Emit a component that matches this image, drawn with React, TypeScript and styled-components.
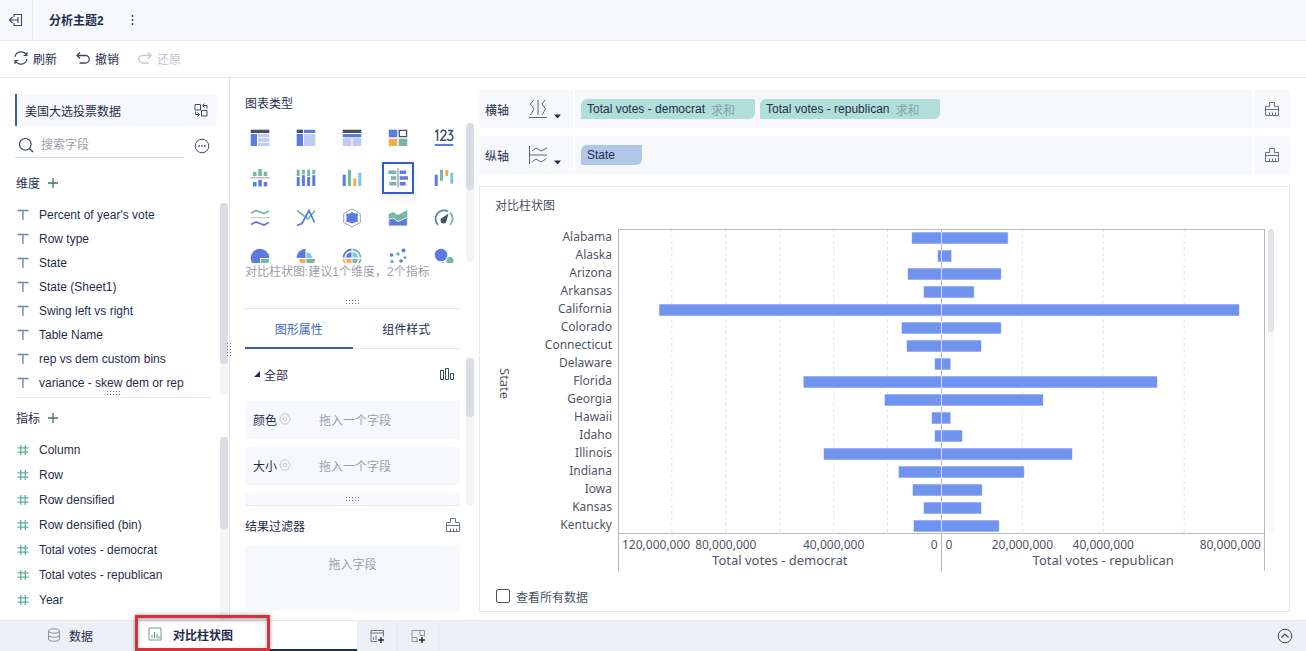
import React from 'react';
import styled, { createGlobalStyle, css } from 'styled-components';

const ink = '#1f2d4d';
const muted = '#9a9fab';
const line = '#e6e8ee';
const soft = '#f7f8fc';
const blue = '#5b7be0';
const pale = '#bccaf4';
const green = '#74b8a6';
const orange = '#f2ac4e';
const sky = '#7cc4ea';
const dark = '#46506a';

const GlobalStyle = createGlobalStyle`
  * { box-sizing: border-box; }
  body { margin: 0; background: #fff; }
  body, button, input {
    font-family: "Liberation Sans", "Noto Sans CJK SC", sans-serif;
    font-size: 12px;
    color: ${ink};
  }
  button { border: 0; padding: 0; background: none; cursor: pointer; }
  ul { list-style: none; margin: 0; padding: 0; }
  h1, h2 { margin: 0; font-size: 12px; font-weight: 400; }
  svg { display: block; flex: none; }
`;

const App = styled.div`
  display: flex;
  flex-direction: column;
  height: 100vh;
  min-width: 960px;
  overflow: hidden;
`;

const TopBar = styled.header`
  display: flex;
  align-items: center;
  flex: none;
  height: 41px;
  background: ${soft};
  border-bottom: 1px solid ${line};
`;

const ExitButton = styled.button`
  display: flex;
  align-items: center;
  justify-content: center;
  width: 33px;
  height: 100%;
  border-right: 1px solid ${line};
`;

const ThemeTitle = styled.h1`
  margin: 0 24px 0 16px;
  padding-bottom: 2px;
  font-weight: 700;
`;

const Toolbar = styled.nav`
  display: flex;
  align-items: center;
  gap: 18px;
  flex: none;
  height: 37px;
  padding: 0 0 2px 13px;
  border-bottom: 1px solid ${line};
`;

const ToolButton = styled.button`
  display: flex;
  align-items: center;
  gap: 4px;
  color: ${ink};
  &:disabled { color: #c3c6ce; }
`;

const Workspace = styled.div`
  display: flex;
  flex: 1;
  min-height: 0;
`;

const FieldPanel = styled.aside`
  position: relative;
  display: flex;
  flex-direction: column;
  width: 230px;
  padding: 16px 1px 0 15px;
  border-right: 1px solid ${line};
`;

const Dataset = styled.div`
  display: flex;
  align-items: center;
  justify-content: space-between;
  flex: none;
  height: 32px;
  margin-right: 11px;
  padding: 0 8px;
  background: ${soft};
  border-left: 2px solid #3d5f9c;
`;

const SearchRow = styled.div`
  display: flex;
  align-items: center;
  gap: 10px;
  flex: none;
  height: 32px;
  margin-right: 18px;
  padding-top: 7px;
`;

const SearchBox = styled.label`
  display: flex;
  align-items: center;
  flex: 1;
  gap: 7px;
  min-width: 0;
  height: 100%;
  padding-left: 3px;
  border-bottom: 1px solid #d6d9df;
`;

const SearchInput = styled.input`
  flex: 1;
  min-width: 0;
  padding: 0;
  border: 0;
  outline: 0;
  background: none;
  &::placeholder { color: ${muted}; opacity: 1; }
`;

const GroupHead = styled.div<{ $height: number }>`
  display: flex;
  align-items: center;
  gap: 8px;
  flex: none;
  height: ${p => p.$height}px;
  padding-left: 1px;
`;

const DimensionHead = styled(GroupHead)`
  padding-top: 4px;
`;

const Scroller = styled.div<{ $grow?: boolean }>`
  display: flex;
  justify-content: space-between;
  flex: ${p => (p.$grow ? '1' : 'none')};
  min-height: 0;
  overflow: hidden;
`;

const Track = styled.div`
  flex: none;
  width: 8px;
  background: #f3f4f6;
  border-radius: 4px;
`;

const Thumb = styled.div<{ $size: number }>`
  width: 8px;
  height: ${p => p.$size}px;
  background: #dadde3;
  border-radius: 4px;
`;

const Field = styled.li<{ $height: number }>`
  display: flex;
  align-items: center;
  gap: 10px;
  height: ${p => p.$height}px;
  padding-left: 2px;
  white-space: nowrap;
`;

const Splitter = styled.div`
  display: flex;
  justify-content: center;
  flex: none;
  border-bottom: 1px solid ${line};
`;

const FieldSplitter = styled(Splitter)`
  height: 7px;
  margin: -4px 16px 0 0;
`;

const ChartSplitter = styled(Splitter)`
  align-items: center;
  height: 12px;
`;

const PanelGrip = styled.div`
  position: absolute;
  right: -3px;
  top: 265px;
`;

const ConfigPanel = styled.aside`
  display: flex;
  flex-direction: column;
  width: 249px;
  padding: 14px 5px 9px 15px;
`;

const ConfigSection = styled.div`
  display: flex;
  flex-direction: column;
  flex: none;
  margin-right: 14px;
`;

const PanelTitle = styled.h2`
  flex: none;
  height: 24px;
  line-height: 24px;
`;

const ChartTypes = styled.div`
  display: grid;
  grid-template-columns: repeat(5, 32px);
  gap: 8px 14px;
  height: 141px;
  margin: 6px 0 0 -1px;
  align-content: start;
  overflow: hidden;
`;

const ChartTypeScroller = styled(Scroller)`
  height: 147px;
  overflow: visible;
  & > ${Track} { margin: 7px 0 0; height: 139px; }
`;

const ChartType = styled.button<{ $active?: boolean }>`
  display: flex;
  align-items: center;
  justify-content: center;
  width: 32px;
  height: 32px;
  ${p => p.$active && css`
    border: 2px solid #2f5fc0;
    box-shadow: 0 4px 10px #00000014;
  `}
`;

const Hint = styled.p`
  flex: none;
  height: 34px;
  margin: 0;
  color: ${muted};
  line-height: 18px;
`;

const Tabs = styled.div`
  display: flex;
  height: 40px;
  border-bottom: 1px solid ${line};
`;

const Tab = styled.button<{ $active?: boolean }>`
  flex: 1;
  height: 40px;
  color: ${p => (p.$active ? '#3b68c4' : ink)};
  border-bottom: 2px solid ${p => (p.$active ? '#3d5f9c' : 'transparent')};
`;

const AttributeScroller = styled(Scroller)`
  flex: 1 1 157px;
  max-height: 157px;
  & > ${Track} { margin: 9px 0 0; }
`;

const Attributes = styled.div`
  display: flex;
  flex-direction: column;
  gap: 8px;
  flex: 1;
  margin-right: 6px;
  border-bottom: 1px solid ${line};
`;

const AttributeHead = styled.div`
  display: flex;
  align-items: center;
  flex: none;
  gap: 4px;
  height: 44px;
  padding: 6px 6px 0 9px;
  & > svg:last-child { margin-left: auto; }
`;

const Attribute = styled.div`
  display: grid;
  grid-template-columns: 66px 1fr;
  align-items: center;
  flex: none;
  height: 38px;
  padding: 0 0 2px 8px;
  background: ${soft};
`;

const AttributeName = styled.span`
  display: flex;
  align-items: center;
  gap: 2px;
`;

const Placeholder = styled.span`
  color: ${muted};
`;

const AttributeGrip = styled.div`
  display: flex;
  align-items: center;
  justify-content: center;
  flex: 1;
  background: ${soft};
`;

const FilterHead = styled.div`
  display: flex;
  align-items: center;
  justify-content: space-between;
  height: 40px;
  padding-bottom: 2px;
`;

const FilterDrop = styled.div`
  flex: 1;
  min-height: 40px;
  margin-right: 14px;
  padding-top: 10px;
  text-align: center;
  line-height: 18px;
  color: ${muted};
  background: ${soft};
`;

const Canvas = styled.main`
  display: flex;
  flex-direction: column;
  flex: 1;
  min-width: 0;
  padding: 12px 16px 8px 0;
`;

const Shelf = styled.section`
  display: grid;
  grid-template-columns: 94px 1fr 36px;
  gap: 2px;
  flex: none;
  height: 38px;
  margin-bottom: 8px;
`;

const ShelfCell = styled.div`
  display: flex;
  align-items: center;
  gap: 5px;
  padding: 0 6px;
  background: ${soft};
`;

const ShelfMode = styled.button`
  display: flex;
  align-items: flex-end;
  gap: 6px;
  margin-left: 14px;
`;

const ClearButton = styled.button`
  display: flex;
  align-items: center;
  justify-content: center;
  background: ${soft};
`;

const Chip = styled.button<{ $kind: 'measure' | 'dimension' }>`
  display: flex;
  align-items: center;
  gap: 6px;
  height: 20px;
  min-width: 61px;
  padding: 0 20px 0 6px;
  border-radius: 6px 0 6px 0;
  background: ${p => (p.$kind === 'measure' ? '#b0dfd9' : '#b1c6e8')};
`;

const Aggregate = styled.span`
  color: #82a3a4;
`;

const Card = styled.section`
  display: flex;
  flex-direction: column;
  flex: 1;
  min-height: 0;
  margin-top: 4px;
  border: 1px solid ${line};
`;

const CardTitle = styled.h2`
  height: 42px;
  padding-left: 15px;
  line-height: 38px;
  color: #4a5266;
`;

const Chart = styled.div`
  display: flex;
  flex: 1;
  min-height: 0;
  padding: 0 15px;
  font-family: "Noto Sans", "Open Sans", sans-serif;
  color: #4f5665;
`;

const AxisTitle = styled.div`
  width: 20px;
  height: 310px;
  writing-mode: vertical-rl;
  text-align: center;
  line-height: 20px;
  font-size: 13px;
`;

const Categories = styled.ul`
  width: 97px;
  margin-right: 6px;
  text-align: right;
  font-size: 12px;
`;

const Category = styled.li`
  height: 18px;
  line-height: 16px;
`;

const Plot = styled.svg`
  flex: 1;
  min-width: 0;
  height: 343px;
  font-size: 12px;
  fill: #4f5665;
`;

const PlotTrack = styled.div`
  width: 6px;
  height: 304px;
  margin-left: 3px;
  background: #f8f8fa;
  border-radius: 3px;
`;

const PlotThumb = styled.div`
  height: 103px;
  background: #e3e4e8;
  border-radius: 3px;
`;

const ShowAll = styled.label`
  display: flex;
  align-items: center;
  gap: 6px;
  flex: none;
  height: 30px;
  padding-left: 16px;
  color: #4a5266;
`;

const Check = styled.input`
  appearance: none;
  width: 14px;
  height: 14px;
  margin: 0;
  border: 1px solid #4a5266;
  border-radius: 2px;
`;

const SheetBar = styled.footer`
  display: flex;
  flex: none;
  height: 31px;
  background: #edf0f5;
  border-top: 1px solid ${line};
`;

const DataTab = styled.button`
  display: flex;
  align-items: center;
  gap: 8px;
  width: 138px;
  padding: 0 0 2px 47px;
`;

const SheetTab = styled.button`
  position: relative;
  display: flex;
  align-items: center;
  gap: 11px;
  width: 219px;
  padding: 0 0 2px 10px;
  font-weight: 700;
  background: #fff;
  border-bottom: 2px solid ${ink};
`;

const Marker = styled.span`
  position: absolute;
  left: -3px;
  top: -6px;
  width: 135px;
  height: 36px;
  border: 3px solid #d0333b;
  box-shadow: 0 0 4px #00000066, inset 0 2px 4px #00000055;
`;

const AddButton = styled.button`
  display: flex;
  align-items: center;
  justify-content: center;
  width: 41px;
  border-right: 1px solid #e3e7ee;
`;

const CollapseButton = styled.button`
  display: flex;
  align-items: center;
  margin: 0 13px 0 auto;
`;

type IconProps = { size?: number; color?: string; children: React.ReactNode };
const Icon = ({ size = 16, color = '#3d4862', children }: IconProps) => (
  <svg width={size} height={size} viewBox={`0 0 ${size} ${size}`} fill="none" stroke={color} aria-hidden="true">
    {children}
  </svg>
);

const GripDots = ({ cols, rows }: { cols: number; rows: number }) => (
  <svg width={cols * 3 - 1} height={rows * 2 + (rows - 1)} fill="#6f7787" aria-hidden="true">
    {Array.from({ length: cols * rows }, (_, i) => (
      <rect key={i} x={(i % cols) * 3} y={Math.floor(i / cols) * 3} width="1" height="1" />
    ))}
  </svg>
);

const TextIcon = () => (
  <Icon size={12} color="#6884b4"><path d="M.5 1.5h11M6 1.5V11" strokeWidth="1.3" /></Icon>
);
const NumberIcon = () => (
  <Icon size={12} color="#5fae9f"><path d="M3.800 1v10M8.300 1v10M.5 3.800h11M.5 8.200h11" strokeWidth="1.3" /></Icon>
);
const PlusIcon = () => <Icon size={10} color="#42705f"><path d="M5 0v10M0 5h10" strokeWidth="1.3" /></Icon>;
const BrushIcon = () => (
  <Icon size={14} color="#66738c"><path d="M4.500 4.500v-4h5v4M.5 4.500h4M9.500 4.500h4v9H.5v-9M.5 7.500h13M4.500 10.500v3M7.500 10.500v3M10.500 10.500v3" /></Icon>
);
const GearIcon = () => (
  <Icon size={12} color="#c6c9d1"><path d="M3.5 1h5L11.300 6l-2.800 5h-5L.7 6z" /><circle cx="6" cy="6" r="1.800" /></Icon>
);
const Caret = () => <svg width="7" height="5" fill={ink} aria-hidden="true"><path d="M0 .5h7L3.500 4.500z" /></svg>;

const chartTypes: { name: string; art: React.ReactNode }[] = [
  { name: '分组表', art: <><path fill={dark} d="M.7 1.700h18.600v3.300H.7z" /><path fill={blue} d="M.7 6h6.300v12H.7z" /><path fill={pale} d="M8 6h11.300v3.300H8zM8 10.300h11.300v3.400H8zM8 14.700h11.300V18H8z" /></> },
  { name: '交叉表', art: <><path fill={dark} d="M.7 1.700H7V5H.7z" /><path fill={blue} d="M8 1.700h11.300V5H8zM.7 6H7v12H.7z" /><path fill={pale} d="M8 6h11.300v12H8z" /></> },
  { name: '明细表', art: <><path fill={dark} d="M.7 1.700h18.600V5H.7z" /><path fill={blue} d="M.7 6h18.600v3.300H.7z" /><path fill={pale} d="M.7 10.300h8.800V18H.7zM10.500 10.300h8.800V18h-8.800z" /></> },
  { name: '颜色表格', art: <><path fill={blue} d="M.7 1.700h8.600v7.600H.7z" /><path fill="none" stroke={dark} strokeWidth="1.300" d="M11.300 2.400h7.300v6.300h-7.300z" /><path fill={orange} d="M.7 10.700h8.600V18H.7z" /><path fill={green} d="M10.700 10.700h8.600V18h-8.600z" /></> },
  { name: 'KPI指标卡', art: <><g fill="none" stroke={dark} strokeWidth="1.500"><path d="M1 4l2.500-1.800V13M7 4.600c.3-3.200 5-3.200 5 0 0 2.400-3 4.200-5.200 7.700h5.600M14 2.500h4.500L15.800 6.300c4.200-.3 3.900 6.200 0 6.200-1.300 0-2-.7-2.400-1.600" /></g><path fill={blue} d="M.7 16h18.600v2H.7z" /></> },
  { name: '对比柱形图', art: <><path fill={green} d="M3 3.700h3.500V8H3zM8.300 1h3.500v7H8.300zM13.700 3.700h3.500V8h-3.500z" /><path fill="#b9bec8" d="M.7 9h18.600v1.500H.7z" /><path fill={blue} d="M3 14h3.500v4.500H3zM8.300 11.700h3.500v6.800H8.300zM13.700 14h3.500v4.500h-3.500z" /></> },
  { name: '堆积柱形图', art: <><path fill={green} d="M.7 1.700h3V8h-3zM5.900 1.700h3v4.600h-3zM11.100 1.700h3V8h-3zM16.300 1.700h3v4.600h-3z" /><path fill={blue} d="M.7 9h3v9h-3zM5.900 7.300h3V18h-3zM11.100 9h3v9h-3zM16.300 7.300h3V18h-3z" /></> },
  { name: '多系列柱形图', art: <><path fill={blue} d="M.7 6.700h3V18h-3z" /><path fill={green} d="M6 1.700h3V18H6z" /><path fill={orange} d="M11.300 10.300h3V18h-3z" /><path fill={sky} d="M16.300 4.700h3V18h-3z" /></> },
  { name: '对比条形图', art: <><path fill={green} d="M.3 2.500h8v3.500h-8zM3 8.300h5.300v3.400H3zM1.300 14h7v3.500h-7z" /><path fill="#b9bec8" d="M9 .5h2v19H9z" /><path fill={blue} d="M11.700 2.500h6.500V6h-6.500zM11.700 8.300H20v3.400h-8.300zM11.700 14h6v3.500h-6z" /></> },
  { name: '瀑布图', art: <><path fill={blue} d="M.7 6.700h3V18h-3z" /><path fill={green} d="M6 1.700h3v11H6z" /><path fill={orange} d="M11.300 1.700h3V8h-3z" /><path fill={sky} d="M16.300 4.700h3v11h-3z" /></> },
  { name: '范围面积图', art: <g fill="none" strokeWidth="1.800"><path stroke={green} d="M1 5L6 2.500l8 3L19 3" /><path stroke="#b9bec8" strokeWidth="1" d="M.7 9.700h18.600" /><path stroke={blue} d="M1 16.500L6 14l8 3 5-2.500" /></g> },
  { name: '折线图', art: <g fill="none" strokeWidth="1.800"><path stroke={green} d="M1 2.500L12 11l7-8.500" /><path stroke={blue} d="M1 17.500l5-2L13 2.500l5.500 12" /></g> },
  { name: '雷达图', art: <><path fill="none" stroke="#8fa7a8" d="M10 1l8.300 4.500v9L10 19l-8.300-4.500v-9z" /><path fill={blue} d="M10 3.800l2 1.500 4 .2-.5 4.500.5 4-3.500.5L10 15.500l-2.500-1L4 14l.8-4L4 5.800l4-.3z" /></> },
  { name: '面积图', art: <><path fill={green} d="M.7 6L5 4l5 3 9.300-5v16H.7z" /><path fill={blue} stroke="#fff" strokeWidth=".8" d="M.7 11.500L5 10l5 3.500 9.300-4V18H.7z" /></> },
  { name: '仪表盘', art: <><g fill="none" strokeWidth="1.800"><path stroke={blue} d="M4 16.800A8.500 8.500 0 0 1 14 3.300" /><path stroke={green} d="M16 4.500a8.500 8.500 0 0 1 0 12.300" /></g><path fill={dark} d="M14.500 5.500l-2 7.500a3 3 0 1 1-3.600-3.400z" /></> },
  { name: '饼图', art: <><path fill={blue} d="M10 .7a9.300 9.300 0 0 1 9.300 9.300H10v9.300A9.300 9.300 0 0 1 10 .7z" /><path fill={green} d="M11 11h8.300a9 9 0 0 1-8.300 8.300z" /></> },
  { name: '玫瑰图', art: <><path fill={blue} d="M9.500.7v9.300H.7A9 9 0 0 1 9.500.7z" /><path fill={sky} d="M10.500 4.500A6 6 0 0 1 16 10h-5.500z" /><path fill={orange} d="M3 11h6.500v6A6.500 6.500 0 0 1 3 11z" /><path fill={green} d="M10.500 11h8.800a9 9 0 0 1-8.800 8z" /></> },
  { name: '多层饼图', art: <><g fill="none" strokeWidth="1.800"><path stroke={blue} d="M1.500 9.500a8.500 8.500 0 0 1 8-8" /><path stroke={green} d="M10.500 1.500a8.500 8.500 0 0 1 8 8" /><path stroke={orange} d="M1.500 11a8.500 8.500 0 0 0 8 8" /><path stroke={green} d="M10.500 19a8.500 8.500 0 0 0 8-8" /></g><path fill={blue} d="M9.500 4v5.500H4A6 6 0 0 1 9.500 4z" /><path fill={sky} d="M10.500 4A6 6 0 0 1 16 9.500h-5.500z" /><path fill={orange} d="M4 11h5.500v5.500A6 6 0 0 1 4 11z" /><path fill={green} d="M10.500 11H16a6 6 0 0 1-5.500 5.500z" /></> },
  { name: '散点图', art: <><g fill={blue}><circle cx="15.500" cy="2.500" r="2" /><circle cx="3.500" cy="7" r="1.800" /><circle cx="13" cy="13" r="1.800" /></g><g fill={green}><circle cx="10" cy="6" r="1.800" /><circle cx="17" cy="9.500" r="1.600" /><circle cx="4" cy="13.500" r="1.800" /></g></> },
  { name: '气泡图', art: <><circle cx="7" cy="7" r="6.300" fill={blue} /><circle cx="16" cy="12.500" r="3.500" fill={green} /><circle cx="9" cy="16" r="2" fill={sky} /></> },
];

const dimensions = [
  "Percent of year's vote", 'Row type', 'State', 'State (Sheet1)',
  'Swing left vs right', 'Table Name', 'rep vs dem custom bins', 'variance - skew dem or rep',
];
const measures = [
  'Column', 'Row', 'Row densified', 'Row densified (bin)',
  'Total votes - democrat', 'Total votes - republican', 'Year',
];

// State, democrat votes and republican votes, in millions
const votes: [string, number, number][] = [
  ['Alabama', 11.1, 16.5], ['Alaska', 1.5, 2.5], ['Arizona', 12.6, 14.8], ['Arkansas', 6.7, 8.1],
  ['California', 104.8, 73.7], ['Colorado', 14.9, 14.8], ['Connecticut', 13, 9.9], ['Delaware', 2.6, 2.3],
  ['Florida', 51.3, 53.4], ['Georgia', 21.2, 25.2], ['Hawaii', 3.7, 2.3], ['Idaho', 2.6, 5.2],
  ['Illinois', 43.8, 32.4], ['Indiana', 16, 20.5], ['Iowa', 10.8, 10.1], ['Kansas', 6.7, 9.9], ['Kentucky', 10.4, 14.3],
];

const leftX = (v: number) => 50 - (v / 120) * 50;
const rightX = (v: number) => 50 + (v / 80) * 50;
const grid = [...[20, 40, 60, 80, 100].map(leftX), ...[20, 40, 60].map(rightX)];
const ticks: { x: number; label: string; anchor: 'start' | 'middle' | 'end' }[] = [
  { x: 0, label: '120,000,000', anchor: 'start' },
  { x: leftX(80), label: '80,000,000', anchor: 'middle' },
  { x: leftX(40), label: '40,000,000', anchor: 'middle' },
  { x: 50, label: '0', anchor: 'end' },
  { x: 50, label: '0', anchor: 'start' },
  { x: rightX(20), label: '20,000,000', anchor: 'middle' },
  { x: rightX(40), label: '40,000,000', anchor: 'middle' },
  { x: 100, label: '80,000,000', anchor: 'end' },
];
const tickShift = { start: 4, middle: 0, end: -4 };

const VotesPlot = () => (
  <Plot role="img" aria-label="Total votes by state">
    {grid.map(x => (
      <line key={x} x1={`${x}%`} x2={`${x}%`} y1="0" y2="304" stroke="#dfe1e6" strokeDasharray="3 3" />
    ))}
    <g stroke="#b7b9bf" shapeRendering="crispEdges">
      <line x1="0" x2="100%" y1=".5" y2=".5" />
      <line x1="0" x2="100%" y1="304.500" y2="304.500" />
      <line x1=".5" x2=".5" y1="0" y2="342" />
      <line x1="50%" x2="50%" y1="0" y2="342" />
      <line x1="100%" x2="100%" y1="0" y2="342" strokeWidth="2" />
    </g>
    {votes.map(([state, dem, rep], i) => (
      <g key={state} fill="#6f93ee" stroke="#fff" strokeWidth=".6">
        <rect x={`${leftX(dem)}%`} width={`${50 - leftX(dem)}%`} y={i * 18 + 3} height="12" rx="1" />
        <rect x="50%" width={`${rightX(rep) - 50}%`} y={i * 18 + 3} height="12" rx="1" />
      </g>
    ))}
    {ticks.map((t, i) => (
      <text key={i} x={`${t.x}%`} dx={tickShift[t.anchor]} y="320" textAnchor={t.anchor}>{t.label}</text>
    ))}
    <text x="25%" y="336" textAnchor="middle" fontSize="13">Total votes - democrat</text>
    <text x="75%" y="336" textAnchor="middle" fontSize="13">Total votes - republican</text>
  </Plot>
);

const Bar = ({ size }: { size: number }) => <Track><Thumb $size={size} /></Track>;

export default function AnalysisPage() {
  return (
    <App>
      <GlobalStyle />
      <TopBar>
        <ExitButton aria-label="退出">
          <Icon><path d="M6 5V2.500h7.500v11H6V11M10 8H1.500M4.500 5L1.500 8l3 3M10 5v6" strokeWidth="1.100" /></Icon>
        </ExitButton>
        <ThemeTitle>分析主题2</ThemeTitle>
        <button aria-label="更多">
          <svg width="8" height="12" fill={ink}><circle cx="4.500" cy="2" r=".9" /><circle cx="4.500" cy="6" r=".9" /><circle cx="4.500" cy="10" r=".9" /></svg>
        </button>
      </TopBar>
      <Toolbar>
        <ToolButton>
          <Icon><path d="M2 7a6.200 6.200 0 0 1 11.500-2M14 9A6.200 6.200 0 0 1 2.500 11M14 2v3.500h-3.500M2 14v-3.500h3.500" strokeWidth="1.200" /></Icon>
          刷新
        </ToolButton>
        <ToolButton>
          <Icon><path d="M5 2.500L2 5.500l3 3M2 5.500h8.500a3.500 3.500 0 0 1 0 7.500H4.500" strokeWidth="1.300" /></Icon>
          撤销
        </ToolButton>
        <ToolButton disabled>
          <Icon color="#c3c6ce"><path d="M11 2.500l3 3-3 3M14 5.500H5.500a3.500 3.500 0 0 0 0 7.500h6" strokeWidth="1.300" /></Icon>
          还原
        </ToolButton>
      </Toolbar>

      <Workspace>
        <FieldPanel>
          <Dataset>
            美国大选投票数据
            <button aria-label="切换数据">
              <Icon><path d="M2 2.500h5.500V8H2zM8.500 8.500H14V14H8.500zM14 6.500v-3H9.500M11.500 1.500l-2 2 2 2M2.500 9.500v3H6.500M4.500 10.500l2 2-2 2" /></Icon>
            </button>
          </Dataset>
          <SearchRow>
            <SearchBox>
              <Icon><circle cx="7.300" cy="7.300" r="5.800" strokeWidth="1.200" /><path d="M11.500 11.500L15 15" strokeWidth="1.200" /></Icon>
              <SearchInput type="text" placeholder="搜索字段" aria-label="搜索字段" />
            </SearchBox>
            <button aria-label="更多选项">
              <Icon><circle cx="8" cy="8" r="6.800" /><path d="M4.300 8h1.600M7.200 8h1.600M10.100 8h1.600" strokeWidth="1.500" /></Icon>
            </button>
          </SearchRow>
          <DimensionHead $height={45}>维度<button aria-label="添加维度"><PlusIcon /></button></DimensionHead>
          <Scroller>
            <ul>{dimensions.map(name => <Field key={name} $height={24}><TextIcon />{name}</Field>)}</ul>
            <Bar size={161} />
          </Scroller>
          <FieldSplitter><GripDots cols={5} rows={2} /></FieldSplitter>
          <GroupHead $height={39}>指标<button aria-label="添加指标"><PlusIcon /></button></GroupHead>
          <Scroller $grow>
            <ul>{measures.map(name => <Field key={name} $height={25}><NumberIcon />{name}</Field>)}</ul>
            <Bar size={92} />
          </Scroller>
          <PanelGrip><GripDots cols={2} rows={5} /></PanelGrip>
        </FieldPanel>

        <ConfigPanel>
          <PanelTitle>图表类型</PanelTitle>
          <ChartTypeScroller>
            <ChartTypes>
              {chartTypes.map((type, i) => (
                <ChartType key={type.name} $active={i === 8} aria-label={type.name}>
                  <svg width="20" height="20" viewBox="0 0 20 20">{type.art}</svg>
                </ChartType>
              ))}
            </ChartTypes>
            <Bar size={67} />
          </ChartTypeScroller>
          <Hint>对比柱状图:建议1个维度，2个指标</Hint>
          <ConfigSection>
            <ChartSplitter><GripDots cols={5} rows={2} /></ChartSplitter>
            <Tabs role="tablist">
              <Tab role="tab" aria-selected $active>图形属性</Tab>
              <Tab role="tab" aria-selected={false}>组件样式</Tab>
            </Tabs>
          </ConfigSection>
          <AttributeScroller>
            <Attributes>
              <AttributeHead>
                <svg width="6" height="6" fill={ink}><path d="M6 0v6H0z" /></svg>
                全部
                <Icon size={14}><path d="M.5 3.500h3v9h-3zM5.500 1.500h3v11h-3zM10.500 6.500h3v6h-3z" /></Icon>
              </AttributeHead>
              <Attribute><AttributeName>颜色<GearIcon /></AttributeName><Placeholder>拖入一个字段</Placeholder></Attribute>
              <Attribute><AttributeName>大小<GearIcon /></AttributeName><Placeholder>拖入一个字段</Placeholder></Attribute>
              <AttributeGrip><GripDots cols={5} rows={2} /></AttributeGrip>
            </Attributes>
            <Bar size={59} />
          </AttributeScroller>
          <ConfigSection>
            <FilterHead>结果过滤器<button aria-label="清空过滤器"><BrushIcon /></button></FilterHead>
          </ConfigSection>
          <FilterDrop>拖入字段</FilterDrop>
        </ConfigPanel>

        <Canvas>
          <Shelf>
            <ShelfCell>
              横轴
              <ShelfMode aria-label="横轴设置">
                <Icon size={20} color="#5a6478"><path d="M5.500 1L2.500 5l3.500 5-3.500 6M10 1v15M17 1l-3 4 3.500 5-3.500 6M1 18.500h18" /></Icon>
                <Caret />
              </ShelfMode>
            </ShelfCell>
            <ShelfCell>
              <Chip $kind="measure">Total votes - democrat<Aggregate>求和</Aggregate></Chip>
              <Chip $kind="measure">Total votes - republican<Aggregate>求和</Aggregate></Chip>
            </ShelfCell>
            <ClearButton aria-label="清空横轴"><BrushIcon /></ClearButton>
          </Shelf>
          <Shelf>
            <ShelfCell>
              纵轴
              <ShelfMode aria-label="纵轴设置">
                <Icon size={20} color="#5a6478"><path d="M1.500 1v18M1.500 10H19M4 6l4-3 5 3 6-3M4 17l4-3 5 3 5.500-3.500" /></Icon>
                <Caret />
              </ShelfMode>
            </ShelfCell>
            <ShelfCell><Chip $kind="dimension">State</Chip></ShelfCell>
            <ClearButton aria-label="清空纵轴"><BrushIcon /></ClearButton>
          </Shelf>
          <Card>
            <CardTitle>对比柱状图</CardTitle>
            <Chart>
              <AxisTitle>State</AxisTitle>
              <Categories>{votes.map(([state]) => <Category key={state}>{state}</Category>)}</Categories>
              <VotesPlot />
              <PlotTrack><PlotThumb /></PlotTrack>
            </Chart>
            <ShowAll><Check type="checkbox" />查看所有数据</ShowAll>
          </Card>
        </Canvas>
      </Workspace>

      <SheetBar>
        <DataTab>
          <Icon size={14} color="#8b93a3"><ellipse cx="7" cy="3" rx="5.500" ry="2.200" /><path d="M1.500 3v8c0 3 11 3 11 0V3M1.500 7c0 3 11 3 11 0" /></Icon>
          数据
        </DataTab>
        <SheetTab>
          <Icon size={14} color="#6f9b93"><path d="M1 1h12v12H1zM4 11.500V8M6.500 11.500V5M9 11.500V7M11 11.500V9" /></Icon>
          对比柱状图
          <Marker />
        </SheetTab>
        <AddButton aria-label="添加组件">
          <Icon color="#6b7487"><path d="M8 13.500H2v-11h12.500v6M2 5h12.500M4.500 12V9M7 12V7.500" /><path d="M12 9v6M9 12h6" stroke={ink} strokeWidth="1.500" /></Icon>
        </AddButton>
        <AddButton aria-label="添加仪表板">
          <Icon color="#8d95a3"><path d="M8 13.500H2v-11h12.500v6M10 2.500v5h4.500M2 9.500h5v4" /><path d="M12 9v6M9 12h6" stroke={ink} strokeWidth="1.500" /></Icon>
        </AddButton>
        <CollapseButton aria-label="展开">
          <Icon><circle cx="8" cy="8" r="6.800" /><path d="M4.500 9.500L8 6l3.500 3.500" strokeWidth="1.200" /></Icon>
        </CollapseButton>
      </SheetBar>
    </App>
  );
}
